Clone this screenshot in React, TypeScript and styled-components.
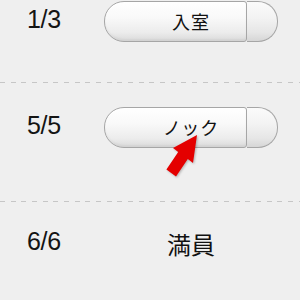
import React from "react";
import styled, { createGlobalStyle } from "styled-components";

const Global = createGlobalStyle`
  html, body { margin: 0; padding: 0; background: #efefef; }
  body { width: 300px; height: 300px; overflow: hidden; }
`;

const Page = styled.div`
  width: 300px;
  height: 300px;
  background: #efefef;
  display: flex;
  flex-direction: column;
  font-family: "Liberation Sans", Arial, sans-serif;
  color: #141414;
`;

const Row = styled.div<{ $height: number; $top: number; $divider?: boolean }>`
  position: relative;
  box-sizing: border-box;
  height: ${(p) => p.$height}px;
  flex: none;
  padding-top: ${(p) => p.$top}px;
  ${(p) =>
    p.$divider
      ? `background-image: repeating-linear-gradient(90deg, #c6c6c6 0 5px, transparent 5px 10.67px);
         background-size: 100% 1px;
         background-repeat: no-repeat;
         background-position: 0 100%;`
      : ""}
`;

const Line = styled.div`
  display: flex;
  align-items: center;
  height: 41px;
`;

const Count = styled.div`
  width: 104px;
  box-sizing: border-box;
  padding-left: 27px;
  font-size: 25px;
  letter-spacing: -0.3px;
  line-height: 1;
  margin-top: -5px;
`;

const Action = styled.div`
  position: relative;
  width: 174px;
  height: 41px;
  display: flex;
  align-items: center;
  justify-content: center;
`;

const Pill = styled.div`
  position: absolute;
  inset: 0;
  display: flex;
`;

const PillMain = styled.div`
  box-sizing: border-box;
  width: 143px;
  height: 100%;
  border: 1px solid #a6a6a6;
  border-radius: 20px 3px 3px 20px;
  background: linear-gradient(180deg, #ffffff 0%, #f9f9f9 40%, #ececec 78%, #dadada 100%);
  box-shadow: inset 0 1px 0 #ffffff, inset 0 -2px 2px rgba(0, 0, 0, 0.04);
`;

const PillCap = styled.div`
  box-sizing: border-box;
  flex: 1;
  height: 100%;
  border: 1px solid #a6a6a6;
  border-left: none;
  border-radius: 0 20px 20px 0;
  background: linear-gradient(180deg, #fbfbfb 0%, #f3f3f3 40%, #e6e6e6 78%, #d6d6d6 100%);
`;

const Label = styled.span<{ $size: number }>`
  position: relative;
  font-family: "Noto Sans CJK JP", "Liberation Sans", sans-serif;
  font-size: ${(p) => p.$size}px;
  line-height: 1;
  color: #111;
  margin-top: ${(p) => (p.$size > 20 ? 0 : -1)}px;
  letter-spacing: ${(p) => (p.$size > 20 ? 0 : 1)}px;
`;

const Arrow = styled.svg`
  position: absolute;
  left: 0;
  top: 0;
  overflow: visible;
  filter: drop-shadow(1px 1px 1px rgba(0, 0, 0, 0.25));
`;

const Button: React.FC<{ label: string }> = ({ label }) => (
  <Action>
    <Pill>
      <PillMain />
      <PillCap />
    </Pill>
    <Label $size={18}>{label}</Label>
  </Action>
);

export default function App() {
  return (
    <Page>
      <Global />
      <Row $height={83} $top={1} $divider>
        <Line>
          <Count>1/3</Count>
          <Button label="入室" />
        </Line>
      </Row>
      <Row $height={119} $top={24} $divider>
        <Line>
          <Count>5/5</Count>
          <Button label="ノック" />
        </Line>
        <Arrow width="300" height="119" viewBox="0 83 300 119">
          <polygon
            fill="#e40000"
            points="197,135 193,163 187.8,159.1 176,176.6 166.4,169.4 178.2,151.9 173,148"
          />
        </Arrow>
      </Row>
      <Row $height={98} $top={21}>
        <Line>
          <Count>6/6</Count>
          <Action>
            <Label $size={24}>満員</Label>
          </Action>
        </Line>
      </Row>
    </Page>
  );
}
